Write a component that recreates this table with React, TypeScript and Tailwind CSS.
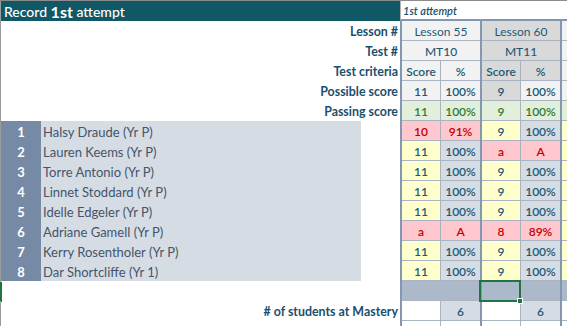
import React from 'react';

type C = { t?: string; cls: string };
type G = { m?: C; a?: C; b?: C; sel?: boolean; noDiv?: boolean };

const LINE = 'border-[#a9b3c2]';

function Cell({ c, w, div, sel }: { c: C; w: string; div?: boolean; sel?: boolean }) {
  return (
    <div
      className={`relative h-full border-b ${LINE} flex items-center justify-center pt-[2px] ${w} ${div ? 'border-l' : ''} ${c.cls}`}
    >
      {c.t}
      {sel && (
        <>
          <div className="absolute left-[-3px] top-[-1px] w-[42px] h-[22px] border-2 border-[#217346] z-10" />
          <div className="absolute left-[35px] top-[17px] w-[6px] h-[6px] bg-[#217346] border border-white z-20" />
        </>
      )}
    </div>
  );
}

function Group({ g, last }: { g: G; last?: boolean }) {
  return (
    <div className={`flex h-full border-l-2 border-[#8497b0] ${last ? 'flex-1 overflow-hidden' : 'w-[80px] shrink-0'}`}>
      {g.m ? (
        <Cell c={g.m} w="w-[78px] shrink-0" />
      ) : (
        <>
          <Cell c={g.a!} w="w-[38px] shrink-0" sel={g.sel} />
          <Cell c={g.b!} w="w-[40px] shrink-0" div={!g.noDiv} />
        </>
      )}
    </div>
  );
}

function Right({ gs }: { gs: G[] }) {
  return (
    <>
      <Group g={gs[0]} />
      <Group g={gs[1]} />
      <Group g={gs[2]} last />
    </>
  );
}

const T = 'text-[#1e5a78]';
const H1 = `bg-[#f2f2f2] ${T}`;
const H2 = `bg-[#d9d9d9] ${T}`;
const SC = `bg-[#ffffcc] ${T} font-semibold`;
const PC = `bg-[#d6dce4] ${T} font-semibold`;
const BAD = 'bg-[#ffc7ce] text-[#c00000] font-semibold';
const PASS = 'bg-[#e2efda] text-[#2f7d32] font-semibold';

function Edge({ green }: { green?: boolean }) {
  return (
    <div className={`relative w-px h-full shrink-0 bg-[#9c9c9c]`}>
      {green && <div className="absolute left-0 top-[1px] w-[2px] h-[20px] bg-[#217346]" />}
    </div>
  );
}

function LabelRow({ label, gs }: { label: string; gs: G[] }) {
  return (
    <div className="flex h-5">
      <Edge />
      <div className="w-[399px] shrink-0 flex items-center justify-end pr-[2px] pt-[2px] font-bold text-[12.4px] text-[#1b4f6e]">
        {label}
      </div>
      <Right gs={gs} />
    </div>
  );
}

const students: { n: number; name: string; g1: [string, string]; g2: [string, string] }[] = [
  { n: 1, name: 'Halsy Draude (Yr P)', g1: ['10', '91%'], g2: ['9', '100%'] },
  { n: 2, name: 'Lauren Keems (Yr P)', g1: ['11', '100%'], g2: ['a', 'A'] },
  { n: 3, name: 'Torre Antonio (Yr P)', g1: ['11', '100%'], g2: ['9', '100%'] },
  { n: 4, name: 'Linnet Stoddard (Yr P)', g1: ['11', '100%'], g2: ['9', '100%'] },
  { n: 5, name: 'Idelle Edgeler (Yr P)', g1: ['11', '100%'], g2: ['9', '100%'] },
  { n: 6, name: 'Adriane Gamell (Yr P)', g1: ['a', 'A'], g2: ['8', '89%'] },
  { n: 7, name: 'Kerry Rosentholer (Yr P)', g1: ['11', '100%'], g2: ['9', '100%'] },
  { n: 8, name: 'Dar Shortcliffe (Yr 1)', g1: ['11', '100%'], g2: ['9', '100%'] },
];

function isBad(p: [string, string]) {
  return p[1] !== '100%';
}

function pair(p: [string, string]): G {
  const bad = isBad(p);
  return { a: { t: p[0], cls: bad ? BAD : SC }, b: { t: p[1], cls: bad ? BAD : PC } };
}

export default function App() {
  return (
    <div className="w-[567px] h-[326px] overflow-hidden bg-white font-['Lato',sans-serif] text-[12px] leading-none">
      <div className="h-px bg-[#8c8c8c]" />
      {/* header */}
      <div className="flex h-5">
        <Edge />
        <div className="w-[399px] shrink-0 bg-[#115866] text-white flex items-center pl-[3px] pt-[1px] text-[14px] font-medium">
          <span>Record&nbsp;</span>
          <span className="font-bold text-[16px]">1st</span>
          <span>&nbsp;attempt</span>
        </div>
        <div className="flex-1 h-full border-l border-[#b3b3b3] border-b-2 border-b-[#8497b0] flex items-center pl-[2px] italic font-semibold text-[11px] text-[#1b4f6e]">
          1st attempt
        </div>
      </div>
      <LabelRow
        label="Lesson #"
        gs={[{ m: { t: 'Lesson 55', cls: H1 } }, { m: { t: 'Lesson 60', cls: H2 } }, { m: { t: '', cls: H1 } }]}
      />
      <LabelRow
        label="Test #"
        gs={[{ m: { t: 'MT10', cls: `${H1} font-medium` } }, { m: { t: 'MT11', cls: `${H2} font-medium` } }, { m: { t: '', cls: H1 } }]}
      />
      <LabelRow
        label="Test criteria"
        gs={[
          { a: { t: 'Score', cls: `${H1} font-semibold` }, b: { t: '%', cls: `${H1} font-semibold` } },
          { a: { t: 'Score', cls: `${H2} font-semibold` }, b: { t: '%', cls: `${H2} font-semibold` } },
          { a: { t: '', cls: H1 }, b: { t: '', cls: H1 } },
        ]}
      />
      <LabelRow
        label="Possible score"
        gs={[
          { a: { t: '11', cls: `${H1} font-semibold` }, b: { t: '100%', cls: `${H1} font-semibold` } },
          { a: { t: '9', cls: `${H2} font-semibold` }, b: { t: '100%', cls: `${H1} font-semibold` } },
          { a: { t: '', cls: H1 }, b: { t: '', cls: H1 } },
        ]}
      />
      <LabelRow
        label="Passing score"
        gs={[
          { a: { t: '11', cls: PASS }, b: { t: '100%', cls: PASS } },
          { a: { t: '9', cls: PASS }, b: { t: '100%', cls: PASS } },
          { a: { t: '', cls: PASS }, b: { t: '', cls: PASS } },
        ]}
      />
      {students.map((s) => (
        <div key={s.n} className="flex h-5">
          <Edge />
          <div className="w-[40px] shrink-0 bg-[#768aa6] text-white font-bold text-[13px] flex items-center justify-center pt-[2px]">
            {s.n}
          </div>
          <div className="w-[320px] shrink-0 bg-[#d6dce4] text-[#44546a] text-[13px] flex items-center pl-[2px] pt-[2px]">
            {s.name}
          </div>
          <div className="w-[39px] shrink-0" />
          <Right gs={[pair(s.g1), pair(s.g2), { a: { t: '', cls: SC }, b: { t: '', cls: PC } }]} />
        </div>
      ))}
      {/* grey row */}
      <div className="flex h-5">
        <Edge green />
        <div className="w-[399px] shrink-0" />
        <Right
          gs={[
            { a: { t: '', cls: 'bg-[#acb9ca]' }, b: { t: '', cls: 'bg-[#acb9ca]' }, noDiv: true },
            { a: { t: '', cls: 'bg-[#acb9ca]' }, b: { t: '', cls: 'bg-[#acb9ca]' }, noDiv: true, sel: true },
            { a: { t: '', cls: 'bg-[#acb9ca]' }, b: { t: '', cls: 'bg-[#acb9ca]' }, noDiv: true },
          ]}
        />
      </div>
      <LabelRow
        label="# of students at Mastery"
        gs={[
          { a: { t: '', cls: 'bg-white' }, b: { t: '6', cls: PC } },
          { a: { t: '', cls: 'bg-white' }, b: { t: '6', cls: PC } },
          { a: { t: '', cls: 'bg-white' }, b: { t: '', cls: PC } },
        ]}
      />
      <div className="flex h-5">
        <Edge />
        <div className="w-[399px] shrink-0" />
        <Right
          gs={[
            { a: { t: '', cls: 'bg-white' }, b: { t: '', cls: 'bg-white' } },
            { a: { t: '', cls: 'bg-white' }, b: { t: '', cls: 'bg-white' } },
            { a: { t: '', cls: 'bg-white' }, b: { t: '', cls: 'bg-white' } },
          ]}
        />
      </div>
    </div>
  );
}
